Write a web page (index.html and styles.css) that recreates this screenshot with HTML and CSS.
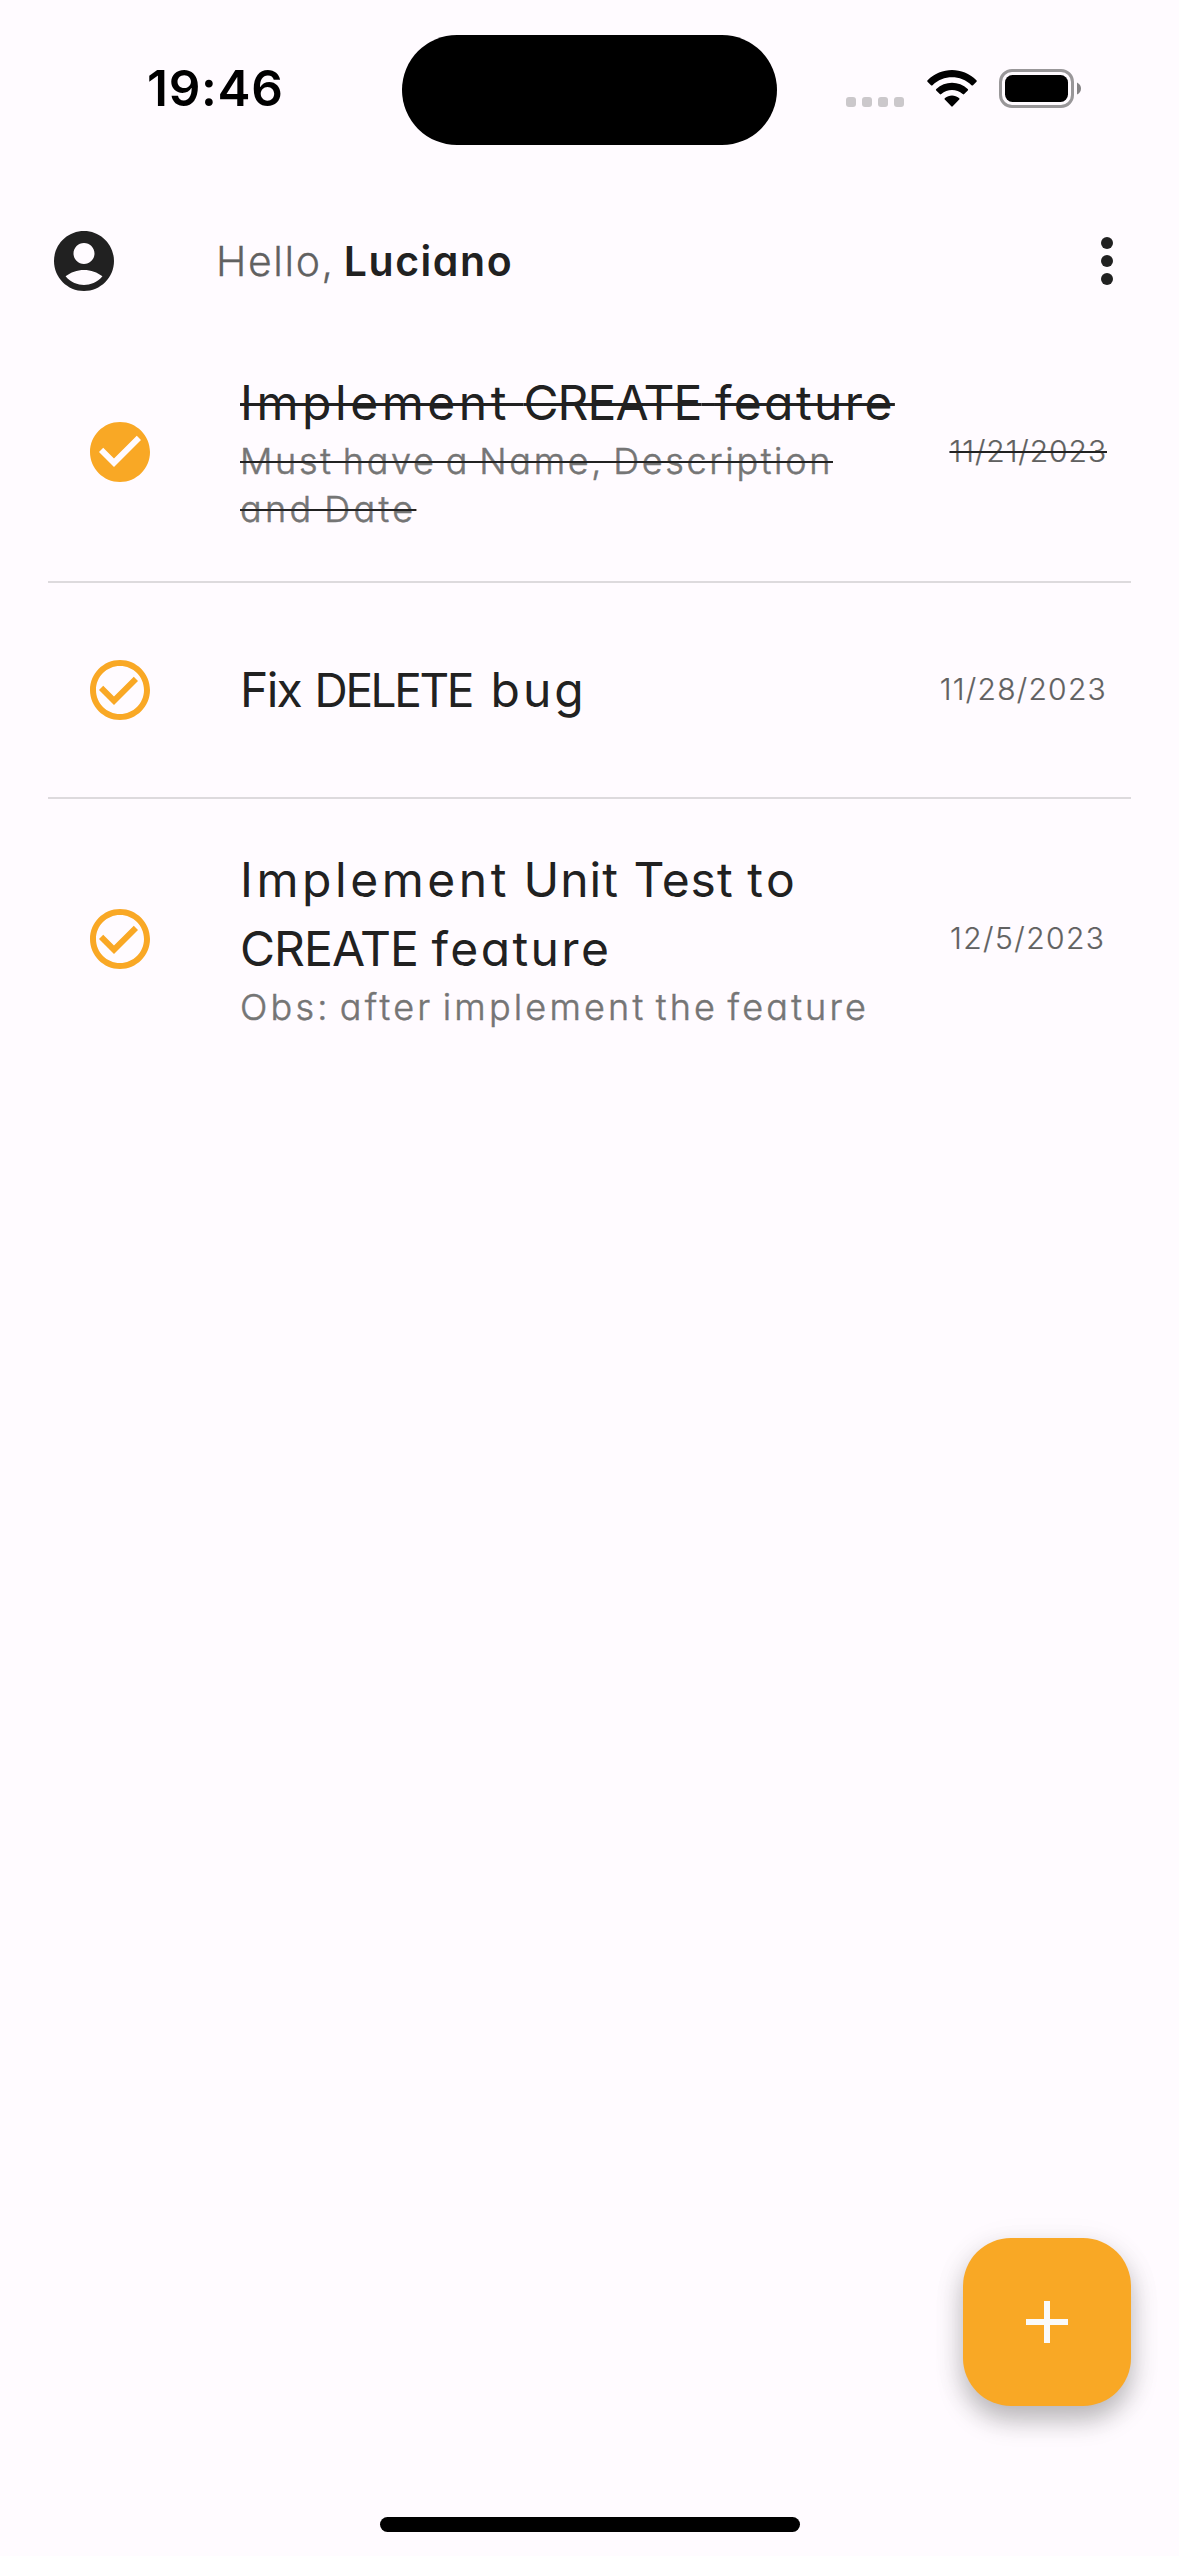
FILE: index.html
```html
<!DOCTYPE html>
<html lang="en">
<head>
<meta charset="utf-8">
<title>Tasks</title>
<link rel="stylesheet" href="styles.css">
</head>
<body>
<div class="phone">
  <header class="status">
    <div class="time">19:46</div>
    <div class="island"></div>
    <div class="indicators">
      <svg class="cell" viewBox="0 0 58 37"><rect y="27" width="10" height="10" rx="3"/><rect x="16" y="27" width="10" height="10" rx="3"/><rect x="32" y="27" width="10" height="10" rx="3"/><rect x="48" y="27" width="10" height="10" rx="3"/></svg>
      <svg class="wifi" viewBox="0 0 50 37"><path d="M.6 10.200C14.500-3.400 35.500-3.400 49.400 10.200Q50.200 11 49.500 11.800L46 15.200Q45.300 15.900 44.500 15.200C33.500 4.600 16.500 4.600 5.500 15.200Q4.700 15.900 4 15.200L.5 11.800Q-.2 11 .6 10.200ZM9.300 19C18 10.600 32 10.600 40.700 19Q41.500 19.800 40.800 20.500L37.200 24.100Q36.500 24.700 35.700 24C29.700 18.500 20.300 18.500 14.300 24Q13.500 24.700 12.800 24.100L9.200 20.500Q8.500 19.800 9.300 19ZM18 28C22 24.600 28 24.600 32 28Q32.900 28.800 32.200 29.600L25.700 36.300Q25 37 24.300 36.300L17.800 29.600Q17.100 28.800 18 28Z"/></svg>
      <svg class="battery" viewBox="0 0 83 39"><rect class="shell" x="1.500" y="1.500" width="72" height="36" rx="11.500"/><rect x="6" y="6" width="63" height="27" rx="7.500"/><path class="nub" d="M78 13.500Q82 15.500 82 19.500T78 25.500Z"/></svg>
    </div>
  </header>

  <div class="appbar">
    <svg class="icon" viewBox="0 0 24 24"><path d="M12 2C6.480 2 2 6.480 2 12s4.480 10 10 10 10-4.480 10-10S17.520 2 12 2zm0 4c1.930 0 3.500 1.570 3.500 3.500S13.930 13 12 13s-3.500-1.570-3.500-3.500S10.070 6 12 6zm0 14c-2.030 0-4.430-.82-6.140-2.880C7.550 15.800 9.680 15 12 15s4.450.8 6.140 2.120C16.430 19.180 14.030 20 12 20z"/></svg>
    <p class="greeting"><span class="hello">Hello,</span> <b>Luciano</b></p>
    <svg class="icon" viewBox="0 0 24 24"><circle cx="12" cy="6" r="2"/><circle cx="12" cy="12" r="2"/><circle cx="12" cy="18" r="2"/></svg>
  </div>

  <main class="list">
    <article class="row row-done">
      <svg class="icon check" viewBox="0 0 24 24"><path d="M12 2C6.480 2 2 6.480 2 12s4.480 10 10 10 10-4.480 10-10S17.520 2 12 2zm-2 15l-5-5 1.410-1.410L10 14.170l7.590-7.590L19 8l-9 9z"/></svg>
      <div class="text">
        <h2 class="line strike"><span class="wide">Implement</span> <span class="caps">CREATE</span> <span class="mid">feature</span></h2>
        <p class="sub"><span class="line strike">Must have a Name, Description</span><span class="line strike loose">and Date</span></p>
      </div>
      <time class="date strike">11/21/2023</time>
    </article>
    <article class="row row-single">
      <svg class="icon check" viewBox="0 0 24 24"><path d="M16.590 7.580L10 14.170l-3.590-3.580L5 12l5 5 8-8zM12 2C6.480 2 2 6.480 2 12s4.480 10 10 10 10-4.480 10-10S17.520 2 12 2zm0 18c-4.420 0-8-3.580-8-8s3.580-8 8-8 8 3.580 8 8-3.580 8-8 8z"/></svg>
      <div class="text">
        <h2 class="line"><span class="tight">Fix</span> <span class="narrow">DELETE</span> <span class="last">bug</span></h2>
      </div>
      <time class="date date-wide">11/28/2023</time>
    </article>
    <article class="row row-tall">
      <svg class="icon check" viewBox="0 0 24 24"><path d="M16.590 7.580L10 14.170l-3.590-3.580L5 12l5 5 8-8zM12 2C6.480 2 2 6.480 2 12s4.480 10 10 10 10-4.480 10-10S17.520 2 12 2zm0 18c-4.420 0-8-3.580-8-8s3.580-8 8-8 8 3.580 8 8-3.580 8-8 8z"/></svg>
      <div class="text">
        <h2><span class="line"><span class="wide">Implement</span> <span class="snug">Unit Test</span> <span class="wide">to</span></span><span class="line"><span class="caps">CREATE</span> <span class="mid">feature</span></span></h2>
        <p class="sub note">Obs: after implement the feature</p>
      </div>
      <time class="date date-short">12/5/2023</time>
    </article>
  </main>

  <button class="fab" aria-label="Add task"><svg viewBox="0 0 42 42"><path d="M18 0h6v18h18v6H24v18h-6V24H0v-6h18z"/></svg></button>
  <div class="home"></div>
</div>
</body>
</html>
```
FILE: styles.css
```css
* { box-sizing: border-box; }
body {
  margin: 0;
  background: #fffbff;
  color: #212121;
  font-family: Inter, sans-serif;
  font-feature-settings: "cv11" 1;
}
.phone {
  width: 1179px;
  height: 2556px;
  display: flex;
  flex-direction: column;
  overflow: hidden;
}
svg { display: block; flex: none; }
h2, p { margin: 0; font-weight: 400; }

.status {
  display: grid;
  grid-template-columns: 402px 375px 402px;
  align-items: center;
  height: 199px;
  padding: 34px 0 54px;
}
.time {
  padding: 0 0 3px 147px;
  color: #000;
  font-size: 49.5px;
  font-weight: 600;
  letter-spacing: .7px;
  font-feature-settings: normal;
}
.island { height: 110px; border-radius: 55px; background: #000; }
.indicators { display: flex; align-items: center; padding: 0 0 3px 69px; }
.cell { width: 58px; fill: #cbc8cb; }
.wifi { width: 50px; margin-left: 22.500px; }
.battery { width: 83px; margin-left: 22.500px; }
.shell { fill: none; stroke: #999799; stroke-width: 3; }
.nub { fill: #858385; }

.appbar { display: flex; align-items: center; height: 124px; padding: 0 36px 0 48px; }
.icon { width: 72px; height: 72px; fill: #212121; }
.greeting { flex: 1; margin-left: 96px; font-size: 41px; word-spacing: -2.500px; }
.hello { color: #616161; font-weight: 300; letter-spacing: 1.600px; -webkit-text-stroke: .3px; }
.greeting b { font-weight: 600; letter-spacing: 1.550px; }

.list { flex: 1; padding: 0 48px; }
.row { display: flex; align-items: center; padding: 0 24px 0 36px; }
.row-done { height: 260px; border-bottom: 2px solid #dddadd; }
.row-single { height: 216px; border-bottom: 2px solid #dddadd; }
.row-tall { height: 280px; }
.check { fill: #f9a825; }
.text { flex: 1; margin-left: 84px; padding-bottom: 3px; white-space: nowrap; }
.row-single .text { padding-bottom: 1px; }
h2 { font-size: 48px; line-height: 69px; }
.line { display: block; width: fit-content; }
.wide { letter-spacing: 3.550px; }
.mid { letter-spacing: 2.400px; }
.snug { letter-spacing: 1px; }
.tight { letter-spacing: -1.700px; }
.caps { letter-spacing: -.950px; }
.narrow { font-size: 46px; line-height: 1; letter-spacing: -2.400px; }
.last { letter-spacing: 3px; margin-left: 5px; }
.sub {
  color: #757575;
  font-size: 36px;
  font-weight: 300;
  line-height: 48px;
  letter-spacing: 2.650px;
  word-spacing: -3.500px;
  -webkit-text-stroke: .5px;
}
.loose { letter-spacing: 3.300px; }
.note { letter-spacing: 3.200px; word-spacing: -4px; }
.date {
  padding-bottom: 2px;
  color: #616161;
  font-size: 30px;
  font-weight: 300;
  letter-spacing: .930px;
  -webkit-text-stroke: .2px;
}
.date-wide { letter-spacing: 1.250px; }
.date-short { margin-right: 1.500px; letter-spacing: 1.450px; }
.strike { text-decoration: line-through #212121 3px; }
.sub .strike, .date.strike { text-decoration-thickness: 2px; }

.fab {
  align-self: flex-end;
  display: flex;
  flex: none;
  align-items: center;
  justify-content: center;
  width: 168px;
  height: 168px;
  margin: 0 48px 111px 0;
  border: 0;
  border-radius: 48px;
  background: #f9a825;
  box-shadow: 0 14px 26px rgba(0, 0, 0, .25), 0 6px 36px rgba(0, 0, 0, .06);
}
.fab svg { width: 42px; fill: #fafafa; }
.home { flex: none; width: 420px; height: 15px; margin: 0 auto 24px; border-radius: 8px; background: #000; }
```
